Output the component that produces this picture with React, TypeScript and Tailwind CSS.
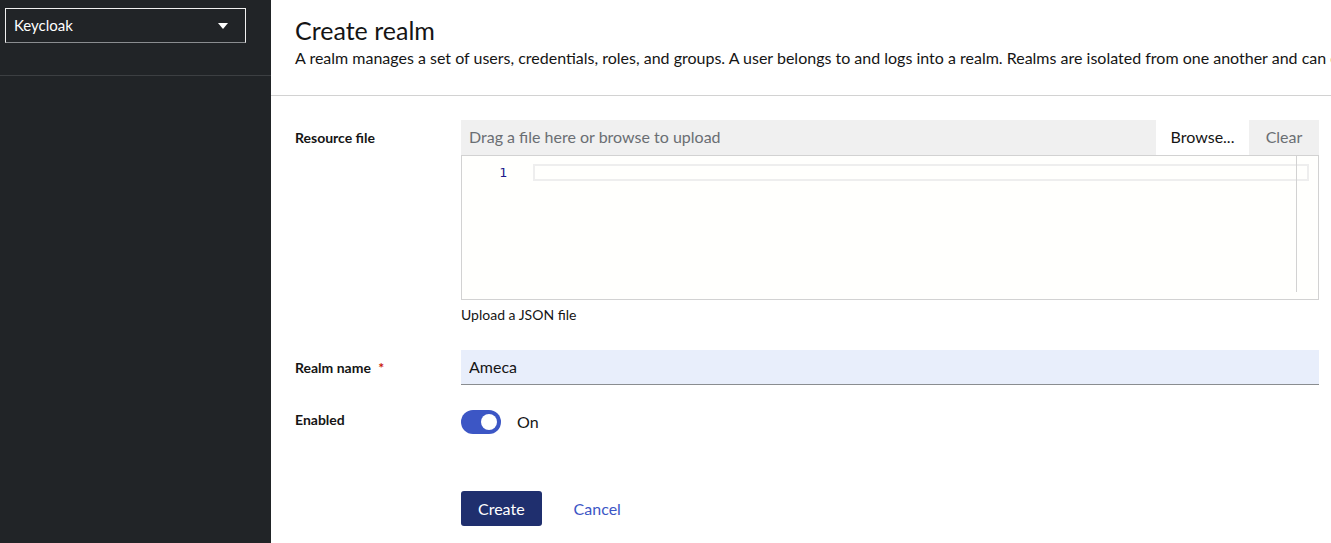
import { useState } from 'react';

const font = { fontFamily: 'Lato, "Open Sans", "Liberation Sans", sans-serif' };

const Sidebar = () => (
  <aside className="w-[271px] shrink-0 bg-[#212427]">
    <div className="pt-2 px-[5px] pb-[32px] border-b border-[#3c3f42]">
      <button className="w-[241px] h-[35px] flex items-center justify-between pl-2 pr-[17px] border border-[#f0f0f0] border-b-[#8a8d90] text-white text-[15px]">
        <span>Keycloak</span>
        <svg width="10" height="6" viewBox="0 0 10 6">
          <path d="M0 0h10L5 6z" fill="#ffffff" />
        </svg>
      </button>
    </div>
  </aside>
);

const CodeEditor = () => (
  <div className="relative h-[145px] border border-[#d2d2d2] bg-[#fffffd]">
    <div className="flex pt-2">
      <div className="w-[71px] pr-[26px] text-right text-[13px] leading-[17px] text-[#1d1a8c]" style={{ fontFamily: '"DejaVu Sans Mono", monospace' }}>
        1
      </div>
      <div className="flex-1 mr-[9px] h-[17px] border-2 border-[#eeeeee]" />
    </div>
    <div className="absolute left-[834px] top-0 h-[136px] w-px bg-[#d2d2d2]" />
  </div>
);

const Toggle = ({ on, onChange }: { on: boolean; onChange: () => void }) => (
  <button onClick={onChange} className="flex items-center gap-4">
    <span className={`w-10 h-6 rounded-full flex items-center px-1 ${on ? 'bg-[#3c56c5] justify-end' : 'bg-[#8a8d90] justify-start'}`}>
      <span className="w-4 h-4 rounded-full bg-white" />
    </span>
    <span className="text-base text-[#151515]">{on ? 'On' : 'Off'}</span>
  </button>
);

export default function App() {
  const [enabled, setEnabled] = useState(true);

  return (
    <div className="flex h-[543px] w-[1331px] overflow-hidden" style={font}>
      <Sidebar />
      <main className="flex-1 min-w-0 bg-white overflow-hidden">
        {/* Header */}
        <section className="pl-6 pt-[15px] pb-[25px] border-b border-[#d2d2d2]">
          <h1 className="text-[25px] leading-[31px] text-[#151515]">Create realm</h1>
          <p className="text-base leading-6 text-[#151515] whitespace-nowrap">
            A realm manages a set of users, credentials, roles, and groups. A user belongs to and logs into a realm. Realms are isolated from one another and can only manage and authenticate the users that they control.
          </p>
        </section>

        {/* Form */}
        <section className="pl-6 pr-3 pt-6 flex flex-col">
          <div className="grid grid-cols-[166px_1fr]">
            <label className="pt-[8px] text-sm font-bold text-[#151515]">Resource file</label>
            <div>
              <div className="flex h-[35px] bg-[#f0f0f0]">
                <div className="flex-1 flex items-center px-2 pb-px text-base text-[#6a6e73]">Drag a file here or browse to upload</div>
                <button className="w-[93px] pb-px bg-white text-base text-[#151515]">Browse...</button>
                <button className="w-[70px] pb-px text-base text-[#6a6e73]">Clear</button>
              </div>
              <CodeEditor />
              <div className="mt-[5px] text-sm leading-5 text-[#151515]">Upload a JSON file</div>
            </div>
          </div>

          <div className="grid grid-cols-[166px_1fr] mt-[25px]">
            <label className="pt-[8px] text-sm font-bold text-[#151515]">
              Realm name <span className="ml-1 text-[#c9190b]">*</span>
            </label>
            <input
              defaultValue="Ameca"
              className="h-[35px] px-2 pb-px text-base text-[#151515] bg-[#e8eefb] border-b border-[#8a8d90] outline-none"
            />
          </div>

          <div className="grid grid-cols-[166px_1fr] mt-[25px]">
            <label className="text-sm font-bold text-[#151515]">Enabled</label>
            <div>
              <Toggle on={enabled} onChange={() => setEnabled(!enabled)} />
            </div>
          </div>

          <div className="grid grid-cols-[166px_1fr] mt-[57px]">
            <div />
            <div className="flex gap-4">
              <button className="h-[35px] px-[17px] rounded-[3px] bg-[#1f2f6e] text-white text-base">Create</button>
              <button className="h-[35px] px-4 text-[#3c56c5] text-base">Cancel</button>
            </div>
          </div>
        </section>
      </main>
    </div>
  );
}
